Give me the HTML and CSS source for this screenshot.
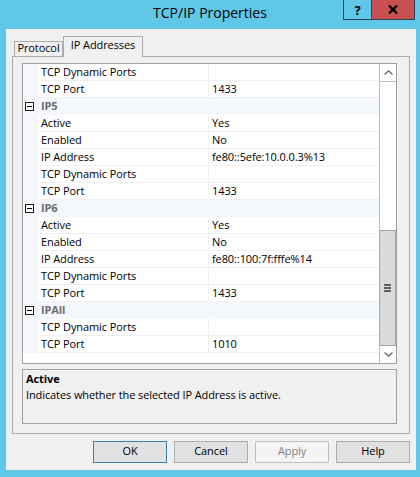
FILE: index.html
```html
<!DOCTYPE html>
<html>
<head>
<meta charset="utf-8">
<title>TCP/IP Properties</title>
<link rel="stylesheet" href="styles.css">
</head>
<body>
<div class="window">
  <div class="titlebar">
    <div class="tb-spacer"></div>
    <div class="title">TCP/IP Properties</div>
    <div class="caption">
      <div class="cbtn help">?</div>
      <div class="cbtn close"><svg width="10" height="9" viewBox="0 0 10 9"><path d="M1 0.5 L9 8.5 M9 0.5 L1 8.5" stroke="#000" stroke-width="2.2" fill="none"/></svg></div>
    </div>
  </div>
  <div class="client">
    <div class="tabs">
      <div class="tab">Protocol</div>
      <div class="tab active">IP Addresses</div>
    </div>
    <div class="panel">
      <div class="grid">
        <div class="rows">
          <div class="row"><div class="g"></div><div class="n">TCP Dynamic Ports</div><div class="v"></div></div>
          <div class="row"><div class="g"></div><div class="n">TCP Port</div><div class="v">1433</div></div>
          <div class="cat"><div class="g"><div class="minus"></div></div><div class="cl">IP5</div></div>
          <div class="row"><div class="g"></div><div class="n">Active</div><div class="v">Yes</div></div>
          <div class="row"><div class="g"></div><div class="n">Enabled</div><div class="v">No</div></div>
          <div class="row"><div class="g"></div><div class="n">IP Address</div><div class="v">fe80::5efe:10.0.0.3%13</div></div>
          <div class="row"><div class="g"></div><div class="n">TCP Dynamic Ports</div><div class="v"></div></div>
          <div class="row"><div class="g"></div><div class="n">TCP Port</div><div class="v">1433</div></div>
          <div class="cat"><div class="g"><div class="minus"></div></div><div class="cl">IP6</div></div>
          <div class="row"><div class="g"></div><div class="n">Active</div><div class="v">Yes</div></div>
          <div class="row"><div class="g"></div><div class="n">Enabled</div><div class="v">No</div></div>
          <div class="row"><div class="g"></div><div class="n">IP Address</div><div class="v">fe80::100:7f:fffe%14</div></div>
          <div class="row"><div class="g"></div><div class="n">TCP Dynamic Ports</div><div class="v"></div></div>
          <div class="row"><div class="g"></div><div class="n">TCP Port</div><div class="v">1433</div></div>
          <div class="cat"><div class="g"><div class="minus"></div></div><div class="cl">IPAll</div></div>
          <div class="row"><div class="g"></div><div class="n">TCP Dynamic Ports</div><div class="v"></div></div>
          <div class="row"><div class="g"></div><div class="n">TCP Port</div><div class="v">1010</div></div>
        </div>
        <div class="vscroll">
          <div class="sbtn up"><svg width="9" height="5" viewBox="0 0 9 5"><path d="M0.5 4.5 L4.5 0.8 L8.5 4.5" stroke="#606060" stroke-width="1.2" fill="none"/></svg></div>
          <div class="track"></div>
          <div class="thumb"><div class="grip"><span></span><span></span><span></span></div></div>
          <div class="sbtn down"><svg width="9" height="5" viewBox="0 0 9 5"><path d="M0.5 0.5 L4.5 4.2 L8.5 0.5" stroke="#606060" stroke-width="1.2" fill="none"/></svg></div>
        </div>
      </div>
      <div class="desc">
        <div class="desc-title">Active</div>
        <div class="desc-text">Indicates whether the selected IP Address is active.</div>
      </div>
    </div>
    <div class="buttons">
      <div class="btn default">OK</div>
      <div class="btn">Cancel</div>
      <div class="btn disabled">Apply</div>
      <div class="btn">Help</div>
    </div>
  </div>
</div>
</body>
</html>
```

FILE: styles.css
```css
html, body {
  margin: 0;
  padding: 0;
}
body {
  font-family: "Open Sans", "Noto Sans", sans-serif;
  font-size: 11px;
  letter-spacing: -0.1px;
  color: #000;
}
.window {
  width: 420px;
  height: 477px;
  background: #61c7e9;
  display: flex;
  flex-direction: column;
  box-sizing: border-box;
}
.titlebar {
  height: 29px;
  display: grid;
  grid-template-columns: 1fr auto 1fr;
  align-items: start;
  flex: none;
}
.title {
  font-size: 14px;
  line-height: 25px;
  letter-spacing: 0;
  color: #000;
}
.caption {
  justify-self: end;
  margin-right: 5px;
  display: flex;
  height: 20px;
}
.cbtn {
  height: 20px;
  box-sizing: border-box;
  border: 1px solid #2e4152;
  border-top: none;
  display: flex;
  align-items: center;
  justify-content: center;
}
.help {
  width: 29px;
  font-weight: bold;
  font-size: 13px;
  letter-spacing: 0;
  line-height: 18px;
}
.close {
  width: 43px;
  border-left: none;
  background: #c75050;
}
.client {
  flex: 1;
  margin: 0 4px 7px 6px;
  background: #f0f0f0;
  padding: 7px 6px 7px 6px;
  display: flex;
  flex-direction: column;
}
.tabs {
  height: 20px;
  display: flex;
  align-items: flex-end;
  padding-left: 2px;
}
.tab {
  box-sizing: border-box;
  height: 15px;
  width: 49px;
  border: 1px solid #acacac;
  border-bottom: none;
  background: #f0f0f0;
  text-align: center;
  line-height: 12px;
}
.tab.active {
  height: 21px;
  width: 80px;
  margin-bottom: -1px;
  position: relative;
  z-index: 1;
  line-height: 15px;
}
.panel {
  box-sizing: border-box;
  height: 378px;
  border: 1px solid #acacac;
  padding: 6px 12px 9px 9px;
  display: flex;
  flex-direction: column;
  gap: 5px;
}
.grid {
  box-sizing: border-box;
  height: 301px;
  border: 1px solid #a0a0a0;
  background: #fff;
  display: flex;
}
.rows {
  flex: 1;
  display: flex;
  flex-direction: column;
}
.row {
  display: grid;
  grid-template-columns: 15px 171px 1fr;
  height: 17px;
}
.g {
  background: #f4f7fc;
}
.n, .v {
  border-bottom: 1px solid #f0f0f0;
  padding-left: 3px;
  line-height: 16px;
  white-space: nowrap;
}
.n {
  border-right: 1px solid #f0f0f0;
}
.cat {
  display: grid;
  grid-template-columns: 15px 1fr;
  height: 17px;
  background: #f4f7fc;
}
.minus {
  box-sizing: border-box;
  width: 9px;
  height: 9px;
  margin: 4px 0 0 2px;
  border: 1px solid #1a1a1a;
  background: #fff;
  display: flex;
  align-items: center;
  justify-content: center;
}
.minus::after {
  content: "";
  width: 5px;
  height: 1px;
  background: #000;
}
.cl {
  padding-left: 3px;
  line-height: 16px;
  font-weight: bold;
  color: #6d6d6d;
}
.vscroll {
  width: 17px;
  box-sizing: border-box;
  border-left: 1px solid #bcbcbc;
  display: flex;
  flex-direction: column;
}
.sbtn {
  display: flex;
  align-items: center;
  justify-content: center;
}
.sbtn.up {
  height: 18px;
  box-sizing: border-box;
  border-bottom: 1px solid #bcbcbc;
}
.sbtn.down {
  height: 17px;
}
.track {
  flex: 1;
}
.thumb {
  height: 116px;
  box-sizing: border-box;
  margin-left: -1px;
  background: #dadada;
  border: 1px solid #a6a6a6;
  display: flex;
  align-items: center;
  justify-content: center;
}
.grip {
  width: 7px;
  display: flex;
  flex-direction: column;
  gap: 1px;
}
.grip span {
  display: block;
  height: 2px;
  background: #606060;
}
.desc {
  box-sizing: border-box;
  height: 55px;
  border: 1px solid #a0a0a0;
  padding: 1px 3px 0 3px;
}
.desc-title {
  font-weight: bold;
  line-height: 16px;
}
.desc-text {
  line-height: 16px;
}
.buttons {
  display: flex;
  justify-content: flex-end;
  gap: 7px;
  margin-top: 7px;
}
.btn {
  box-sizing: border-box;
  width: 74px;
  height: 22px;
  border: 1px solid #adadad;
  background: #e1e1e1;
  text-align: center;
  line-height: 18px;
}
.btn.default {
  border-color: #3c7fb1;
}
.btn.disabled {
  background: #f4f4f4;
  border-color: #bfbfbf;
  color: #838383;
}
```
